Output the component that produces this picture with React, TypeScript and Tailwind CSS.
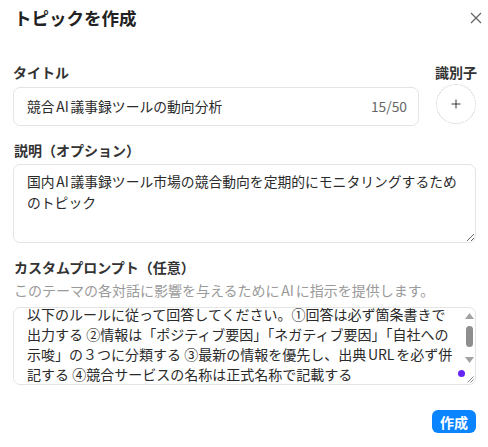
import React, { useEffect, useRef } from "react";
import { Plus } from "lucide-react";

const promptText =
  "以下のルールに従って回答してください。①回答は必ず箇条書きで出力する ②情報は「ポジティブ要因」「ネガティブ要因」「自社への示唆」の３つに分類する ③最新の情報を優先し、出典URLを必ず併記する ④競合サービスの名称は正式名称で記載する";

const labelCls = "block h-5 leading-5 text-[14px] font-semibold text-[#333] [text-autospace:normal]";

const App: React.FC = () => {
  const promptRef = useRef<HTMLTextAreaElement>(null);

  useEffect(() => {
    // prompt box opens slightly scrolled
    if (promptRef.current) promptRef.current.scrollTop = 10;
  }, []);

  return (
    <div className="w-[488px] h-[447px] bg-white pl-[13px] pr-[12px] text-[#2a2a2a] font-['Noto_Sans_CJK_JP','Noto_Sans',sans-serif]">
      {/* header */}
      <div className="h-9 flex items-center justify-between pl-px">
        <h2 className="text-[17.5px] font-bold text-[#222]">トピックを作成</h2>
        <button className="-mr-[6px] text-[#666]">
          <svg width="12" height="12" viewBox="0 0 12 12" fill="none" stroke="currentColor" strokeWidth="1.3">
            <path d="M1 1l10 10M11 1L1 11" />
          </svg>
        </button>
      </div>

      {/* title + identifier */}
      <div className="mt-[26px] flex gap-[17px]">
        <div className="flex-1">
          <label className={labelCls}>タイトル</label>
          <div className="mt-[5px] h-[39px] rounded-[7px] border border-[#e4e4e4] flex items-center pl-[13px] pr-[11px] text-[13.8px] [text-autospace:normal]">
            <span className="flex-1">競合AI議事録ツールの動向分析</span>
            <span className="text-[#666]">15/50</span>
          </div>
        </div>
        <div className="w-10 flex flex-col items-center">
          <label className={`${labelCls} whitespace-nowrap`}>識別子</label>
          <div className="mt-[2px] w-10 h-10 rounded-full border border-dotted border-[#c8c8c8] flex items-center justify-center text-[#333]">
            <Plus size={14} strokeWidth={1.7} />
          </div>
        </div>
      </div>

      {/* description */}
      <label className={`${labelCls} mt-[14px] pl-px`}>説明（オプション）</label>
      <textarea
        className="mt-1 block w-full h-[79px] rounded-[7px] border border-[#e4e4e4] pl-[13px] pr-[10px] pt-[6px] text-[13.8px] leading-[21px] outline-none [text-autospace:normal]"
        defaultValue="国内AI議事録ツール市場の競合動向を定期的にモニタリングするためのトピック"
      />

      {/* custom prompt */}
      <label className={`${labelCls} mt-[14px] pl-px`}>カスタムプロンプト（任意）</label>
      <p className="mt-[3px] h-5 leading-5 text-[14px] text-[#9a9a9a] pl-px [text-autospace:normal]">
        このテーマの各対話に影響を与えるためにAIに指示を提供します。
      </p>
      <div className="relative mt-[7px]">
        <textarea
          ref={promptRef}
          className="block w-full h-[78px] rounded-[7px] border border-[#e4e4e4] pl-[13px] pr-[19px] py-[6px] text-[14px] leading-[20px] outline-none resize-none [scrollbar-width:none] [text-autospace:normal]"
          defaultValue={promptText}
        />
        {/* scrollbar */}
        <div className="absolute right-px top-px w-3 h-[62px] flex flex-col items-center pointer-events-none">
          <svg className="mt-[5px]" width="9" height="6" viewBox="0 0 9 6">
            <polygon points="4.5,0 9,6 0,6" fill="#a3a3a3" />
          </svg>
          <div className="mt-[7px] w-[7px] h-[21px] rounded-full bg-[#8e8e8e]" />
          <svg className="mt-[10px]" width="9" height="6" viewBox="0 0 9 6">
            <polygon points="0,0 9,0 4.5,6" fill="#a3a3a3" />
          </svg>
        </div>
        {/* resize grip */}
        <svg className="absolute right-[2px] bottom-[2px] pointer-events-none" width="8" height="8" viewBox="0 0 8 8" stroke="#8a8a8a" strokeWidth="1">
          <path d="M7.5 1.5L1.5 7.5M7.5 4.5L4.5 7.5" />
        </svg>
        <span className="absolute right-[11px] bottom-[8px] w-[7px] h-[7px] rounded-full bg-[#6424f6]" />
      </div>

      {/* footer */}
      <div className="mt-[25px] flex justify-end">
        <button className="h-[23px] w-11 rounded-[6px] bg-[#0a84ff] text-white text-[14px] font-bold leading-none">
          作成
        </button>
      </div>
    </div>
  );
};

export default App;
